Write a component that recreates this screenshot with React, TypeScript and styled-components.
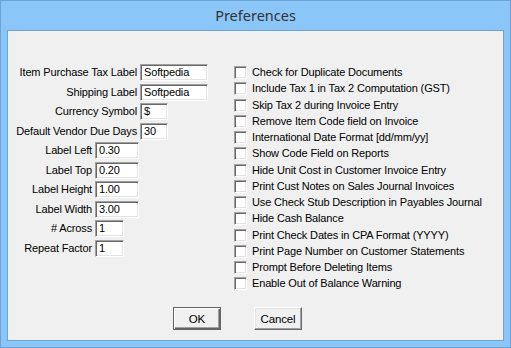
import React from "react";
import styled, { createGlobalStyle } from "styled-components";

const Global = createGlobalStyle`
  html, body { margin: 0; padding: 0; background: #ffffff; }
  body { font-family: "Liberation Sans", Arial, sans-serif; }
`;

const Window = styled.div`
  box-sizing: border-box;
  width: 511px;
  height: 348px;
  border: 1px solid #6fa3d6;
  background: #8ac6f8;
  padding: 0 6px 6px 6px;
  display: flex;
  flex-direction: column;
`;

const TitleBar = styled.div`
  height: 29px;
  display: flex;
  align-items: center;
  justify-content: center;
  font-family: "Noto Sans", "Open Sans", sans-serif;
  font-size: 14.5px;
  color: #333333;
  padding-bottom: 1px;
  box-sizing: border-box;
`;

const Client = styled.div`
  flex: 1;
  border: 1px solid #6fa3d6;
  background: #f0f0f0;
  display: flex;
  flex-direction: column;
  padding-top: 33px;
  box-sizing: border-box;
  font-size: 11px;
  letter-spacing: -0.15px;
  color: #000;
`;

const Body = styled.div`
  display: flex;
`;

const LeftCol = styled.div`
  width: 226px;
  display: flex;
  flex-direction: column;
`;

const FieldRow = styled.div`
  height: 19.5px;
  display: flex;
  align-items: flex-start;
`;

const FieldLabel = styled.div<{ $w: number }>`
  width: ${(p) => p.$w}px;
  height: 17px;
  line-height: 17px;
  text-align: right;
  white-space: nowrap;
  margin-right: 3px;
`;

const TextBox = styled.div<{ $w: number }>`
  box-sizing: border-box;
  width: ${(p) => p.$w}px;
  height: 17px;
  background: #fff;
  border-top: 1px solid #a0a0a0;
  border-left: 1px solid #a0a0a0;
  border-right: 1px solid #ffffff;
  border-bottom: 1px solid #ffffff;
  box-shadow: inset 1px 1px 0 #696969, inset -1px -1px 0 #e3e3e3;
  padding-left: 3px;
  line-height: 15px;
  white-space: nowrap;
  overflow: hidden;
`;

const RightCol = styled.div`
  padding-top: 2px;
  display: flex;
  flex-direction: column;
`;

const CheckRow = styled.div`
  height: 16.25px;
  display: flex;
  align-items: flex-start;
  white-space: nowrap;
`;

const CheckBox = styled.span`
  box-sizing: border-box;
  width: 13px;
  height: 13px;
  flex: none;
  background: #fff;
  border-top: 1px solid #a0a0a0;
  border-left: 1px solid #a0a0a0;
  border-right: 1px solid #ffffff;
  border-bottom: 1px solid #ffffff;
  box-shadow: inset 1px 1px 0 #696969, inset -1px -1px 0 #e3e3e3;
  margin-right: 5px;
`;

const CheckText = styled.span`
  line-height: 13px;
`;

const Footer = styled.div`
  margin-top: auto;
  padding: 0 0 10px 165px;
  display: flex;
  gap: 33px;
`;

const Button = styled.div<{ $default?: boolean }>`
  box-sizing: border-box;
  width: 48px;
  height: 23px;
  display: flex;
  align-items: center;
  justify-content: center;
  background: #f0f0f0;
  font-size: 11.5px;
  ${(p) =>
    p.$default
      ? `border: 1px solid #646464;
         box-shadow: inset 1px 1px 0 #ffffff, inset -1px -1px 0 #646464, inset -2px -2px 0 #a0a0a0;`
      : `border-top: 1px solid #ffffff;
         border-left: 1px solid #ffffff;
         border-right: 1px solid #696969;
         border-bottom: 1px solid #696969;
         box-shadow: inset -1px -1px 0 #a0a0a0, inset 1px 1px 0 #e3e3e3;`}
`;

const fields: { label: string; value: string; lw: number; iw: number }[] = [
  { label: "Item Purchase Tax Label", value: "Softpedia", lw: 129, iw: 68 },
  { label: "Shipping Label", value: "Softpedia", lw: 129, iw: 68 },
  { label: "Currency Symbol", value: "$", lw: 129, iw: 28 },
  { label: "Default Vendor Due Days", value: "30", lw: 129, iw: 28 },
  { label: "Label Left", value: "0.30", lw: 84, iw: 44 },
  { label: "Label Top", value: "0.20", lw: 84, iw: 44 },
  { label: "Label Height", value: "1.00", lw: 84, iw: 44 },
  { label: "Label Width", value: "3.00", lw: 84, iw: 44 },
  { label: "# Across", value: "1", lw: 84, iw: 29 },
  { label: "Repeat Factor", value: "1", lw: 84, iw: 29 },
];

const checks = [
  "Check for Duplicate Documents",
  "Include Tax 1 in Tax 2 Computation (GST)",
  "Skip Tax 2 during Invoice Entry",
  "Remove Item Code field on Invoice",
  "International Date Format [dd/mm/yy]",
  "Show Code Field on Reports",
  "Hide Unit Cost in Customer Invoice Entry",
  "Print Cust Notes on Sales Journal Invoices",
  "Use Check Stub Description in Payables Journal",
  "Hide Cash Balance",
  "Print Check Dates in CPA Format (YYYY)",
  "Print Page Number on Customer Statements",
  "Prompt Before Deleting Items",
  "Enable Out of Balance Warning",
];

export default function App() {
  return (
    <>
      <Global />
      <Window>
        <TitleBar>Preferences</TitleBar>
        <Client>
          <Body>
            <LeftCol>
              {fields.map((f) => (
                <FieldRow key={f.label}>
                  <FieldLabel $w={f.lw}>{f.label}</FieldLabel>
                  <TextBox $w={f.iw}>{f.value}</TextBox>
                </FieldRow>
              ))}
            </LeftCol>
            <RightCol>
              {checks.map((c) => (
                <CheckRow key={c}>
                  <CheckBox />
                  <CheckText>{c}</CheckText>
                </CheckRow>
              ))}
            </RightCol>
          </Body>
          <Footer>
            <Button $default>OK</Button>
            <Button>Cancel</Button>
          </Footer>
        </Client>
      </Window>
    </>
  );
}
